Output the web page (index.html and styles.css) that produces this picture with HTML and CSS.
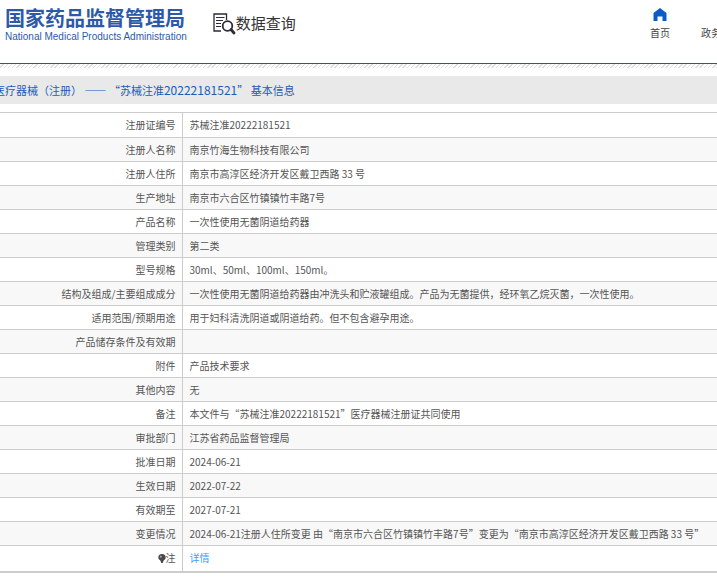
FILE: index.html
```html
<!DOCTYPE html>
<html lang="zh-CN">
<head>
  <meta charset="UTF-8" />
  <meta name="viewport" content="width=device-width, initial-scale=1.0"/>
  <title>国家药品监督管理局 - 数据查询</title>
  <link rel="stylesheet" href="styles.css">
</head>
<body>

  <!-- 顶部 -->
  <header class="header">
    <div class="logo">
      <h1>国家药品监督管理局</h1>
      <p>National Medical Products Administration</p>
    </div>
    <div class="search-title">
      <svg width="23" height="23" viewBox="0 0 23 23" fill="none" stroke="#2d2a3a">
        <path d="M8 18H1V1h12.500v6" stroke-width="1.300"/>
        <path d="M3 4.500h8.500M3 7.500h7M3 10.500h5M3 13.500h5" stroke-width="1.200"/>
        <circle cx="14.500" cy="13" r="4.800" stroke-width="1.800"/>
        <path d="M18 16.500l3 3.500" stroke-width="2.800" stroke-linecap="round"/>
      </svg>
      <span>数据查询</span>
    </div>
    <nav class="nav">
      <a href="#" class="nav-item">
        <svg width="14" height="13" viewBox="0 0 14 13">
          <path d="M7 0L0.500 5V13H4.500V8.500H9.500V13H13.500V5Z" fill="#0b5cc4"/>
        </svg>
        <span>首页</span>
      </a>
      <a href="#" class="nav-item">政务</a>
    </nav>
  </header>
  <div class="stripe"></div>

  <main>
    <h2 class="title">医疗器械（注册） —— “苏械注准<span class="num">20222181521</span>” 基本信息</h2>

    <!-- 注册信息 -->
    <table class="info">
      <tbody>
        <tr class="first"><th scope="row">注册证编号</th><td>苏械注准20222181521</td></tr>
        <tr><th scope="row">注册人名称</th><td>南京竹海生物科技有限公司</td></tr>
        <tr><th scope="row">注册人住所</th><td>南京市高淳区经济开发区戴卫西路 33 号</td></tr>
        <tr><th scope="row">生产地址</th><td>南京市六合区竹镇镇竹丰路7号</td></tr>
        <tr><th scope="row">产品名称</th><td>一次性使用无菌阴道给药器</td></tr>
        <tr><th scope="row">管理类别</th><td>第二类</td></tr>
        <tr><th scope="row">型号规格</th><td>30ml、50ml、100ml、150ml。</td></tr>
        <tr><th scope="row">结构及组成/主要组成成分</th><td>一次性使用无菌阴道给药器由冲洗头和贮液罐组成。产品为无菌提供，经环氧乙烷灭菌，一次性使用。</td></tr>
        <tr><th scope="row">适用范围/预期用途</th><td>用于妇科清洗阴道或阴道给药。但不包含避孕用途。</td></tr>
        <tr><th scope="row">产品储存条件及有效期</th><td></td></tr>
        <tr><th scope="row">附件</th><td>产品技术要求</td></tr>
        <tr><th scope="row">其他内容</th><td>无</td></tr>
        <tr><th scope="row">备注</th><td>本文件与“苏械注准20222181521”医疗器械注册证共同使用</td></tr>
        <tr><th scope="row">审批部门</th><td>江苏省药品监督管理局</td></tr>
        <tr><th scope="row">批准日期</th><td>2024-06-21</td></tr>
        <tr><th scope="row">生效日期</th><td>2022-07-22</td></tr>
        <tr><th scope="row">有效期至</th><td>2027-07-21</td></tr>
        <tr><th scope="row">变更情况</th><td>2024-06-21注册人住所变更 由“南京市六合区竹镇镇竹丰路7号”变更为“南京市高淳区经济开发区戴卫西路 33 号”</td></tr>
        <tr class="note">
          <th scope="row">
            <svg width="8" height="9" viewBox="0 0 8 9"><path d="M4 0a3.700 3.700 0 0 1 3.700 3.700C7.700 5.500 5.500 6 5.300 7.300L4.800 9H3.200L2.700 7.300C2.500 6 .3 5.500 .3 3.700A3.700 3.700 0 0 1 4 0Z" fill="#4a4a4a"/><circle cx="2.800" cy="2.700" r="1" fill="#aaa"/></svg>注
          </th>
          <td><a href="#">详情</a></td>
        </tr>
      </tbody>
    </table>
  </main>

</body>
</html>
```
FILE: styles.css
```css
* {
  margin: 0;
  padding: 0;
  box-sizing: border-box;
}

body {
  background: #fff;
  font-family: "Noto Sans CJK SC", sans-serif;
  font-size: 10px;
  color: #555;
  overflow-x: hidden;
}

a {
  text-decoration: none;
}

/* 顶部 */
.header {
  display: flex;
  align-items: flex-start;
  height: 64px;
  padding-left: 5px;
  border-bottom: 1px solid #1c618f;
}

.logo {
  padding-top: 5px;
  color: #2c5aa8;
  white-space: nowrap;
}

.logo h1 {
  font-size: 20px;
  line-height: 25px;
  font-weight: 700;
}

.logo p {
  font-family: "Liberation Sans", sans-serif;
  font-size: 10px;
  line-height: 14px;
}

.search-title {
  display: flex;
  margin-left: 26px;
  padding-top: 13px;
  font-size: 15px;
  line-height: 20px;
  color: #333;
  white-space: nowrap;
}

/* 导航 */
.nav {
  display: flex;
  align-items: flex-end;
  gap: 31px;
  margin-left: auto;
  margin-right: -4px;
  padding-top: 8px;
}

.nav-item {
  display: flex;
  flex-direction: column;
  align-items: center;
  gap: 4px;
  line-height: 16px;
  color: #444;
  white-space: nowrap;
}

/* 顶部下方的斜纹 */
.stripe {
  height: 4px;
  margin-bottom: 8px;
  background: repeating-linear-gradient(135deg, #fff 0, #fff 2px, #ddd 2px, #ddd 3px);
}

/* 标题栏 */
.title {
  height: 28px;
  margin-bottom: 8px;
  background: #e9e9e9;
  color: #1b5cb8;
  font-size: 11px;
  line-height: 28px;
  font-weight: 400;
  text-indent: -6px;
  white-space: nowrap;
}

.title .num {
  font-size: 12px;
}

/* 信息表格 */
.info {
  width: 100%;
  border-collapse: collapse;
  border-bottom: 2px solid #ccc;
}

.info th,
.info td {
  height: 24px;
  border-top: 1px solid #ccc;
  line-height: 16px;
  font-weight: 400;
  white-space: nowrap;
}

.info th {
  width: 182px;
  padding-right: 6px;
  border-right: 1px solid #ccc;
  text-align: right;
}

.info td {
  padding-left: 7px;
  text-align: left;
}

.info tr:nth-child(even) {
  background: #f8f8f8;
}

.info .first td,
.info .first th {
  height: 25px;
}

.info .note td,
.info .note th {
  height: 26px;
}

.note svg {
  vertical-align: -1px;
}

.note a {
  color: #409eff;
}
```
